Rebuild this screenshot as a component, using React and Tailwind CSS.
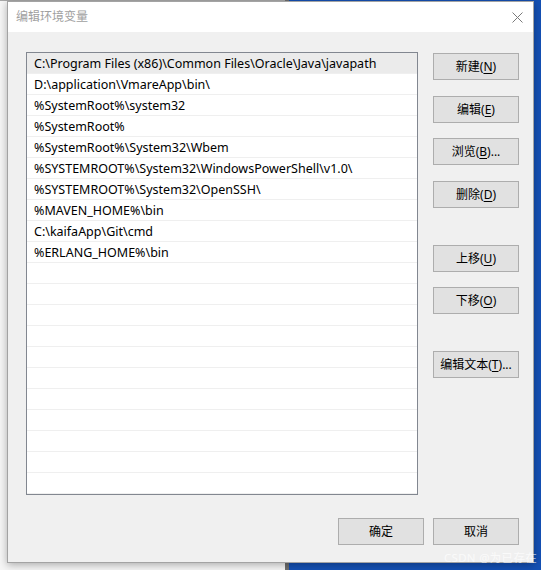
import React from "react";

const paths = [
  "C:\\Program Files (x86)\\Common Files\\Oracle\\Java\\javapath",
  "D:\\application\\VmareApp\\bin\\",
  "%SystemRoot%\\system32",
  "%SystemRoot%",
  "%SystemRoot%\\System32\\Wbem",
  "%SYSTEMROOT%\\System32\\WindowsPowerShell\\v1.0\\",
  "%SYSTEMROOT%\\System32\\OpenSSH\\",
  "%MAVEN_HOME%\\bin",
  "C:\\kaifaApp\\Git\\cmd",
  "%ERLANG_HOME%\\bin",
];

const font = { fontFamily: '"Noto Sans", "Noto Sans CJK SC", sans-serif' };

function Btn({ label, mn, tail = "", className = "" }) {
  return (
    <button
      className={`w-[86px] h-[27px] bg-[#e1e1e1] border border-[#adadad] text-[12px] text-black flex items-center justify-center leading-none ${className}`}
    >
      {label}
      {mn && (
        <>
          (<span className="underline underline-offset-2">{mn}</span>)
        </>
      )}
      {tail}
    </button>
  );
}

export default function App() {
  const rows = Array.from({ length: 21 }, (_, i) => paths[i] || "");

  return (
    <div className="relative w-[541px] h-[570px] overflow-hidden" style={font}>
      {/* desktop behind the dialog */}
      <div className="flex h-full">
        <div className="w-[285px] bg-[#f6f6f6] border-t border-[#a8a8a8]" />
        <div className="w-[4px] bg-[#6e6e6e]" />
        <div className="flex-1 bg-[#1450b4]" />
      </div>

      {/* dialog window */}
      <div className="absolute left-[7px] top-[1px] w-[527px] h-[562px] flex flex-col bg-[#f0f0f0] border border-[#a3a3a3] shadow-[0_2px_8px_rgba(0,0,0,0.3)]">
        <div className="h-[30px] bg-white flex items-center justify-between pl-[8px] pr-[10px] shrink-0">
          <span className="text-[12px] text-[#a0a0a0]">编辑环境变量</span>
          <svg width="11" height="11" viewBox="0 0 11 11">
            <path d="M0.5 0.5L10.5 10.5M10.5 0.5L0.5 10.5" stroke="#7a7a7a" strokeWidth="1" />
          </svg>
        </div>

        <div className="flex-1 flex flex-col pl-[18px] pr-[14px] pt-[20px]">
          <div className="flex gap-[15px]">
            <div className="w-[392px] h-[443px] bg-white border border-[#828790] overflow-hidden">
              {rows.map((p, i) => (
                <div
                  key={i}
                  className={`h-[21px] border-b border-[#efefef] pl-[7px] pt-[2px] flex items-center text-[12.5px] text-black whitespace-nowrap ${
                    i === 0 ? "bg-[#ebebeb]" : ""
                  }`}
                >
                  {p}
                </div>
              ))}
            </div>

            <div className="flex flex-col">
              <Btn label="新建" mn="N" className="mt-[1px]" />
              <Btn label="编辑" mn="E" className="mt-[16px]" />
              <Btn label="浏览" mn="B" tail="..." className="mt-[15px]" />
              <Btn label="删除" mn="D" className="mt-[16px]" />
              <Btn label="上移" mn="U" className="mt-[37px]" />
              <Btn label="下移" mn="O" className="mt-[15px]" />
              <Btn label="编辑文本" mn="T" tail="..." className="mt-[37px]" />
            </div>
          </div>

          <div className="flex justify-end gap-[9px] mt-[23px]">
            <Btn label="确定" />
            <Btn label="取消" />
          </div>
        </div>
      </div>

      {/* watermark */}
      <div className="absolute right-[4px] top-[549px] text-[11.5px] tracking-[0.3px] text-white/70 whitespace-nowrap">
        CSDN @为已存在
      </div>
    </div>
  );
}
